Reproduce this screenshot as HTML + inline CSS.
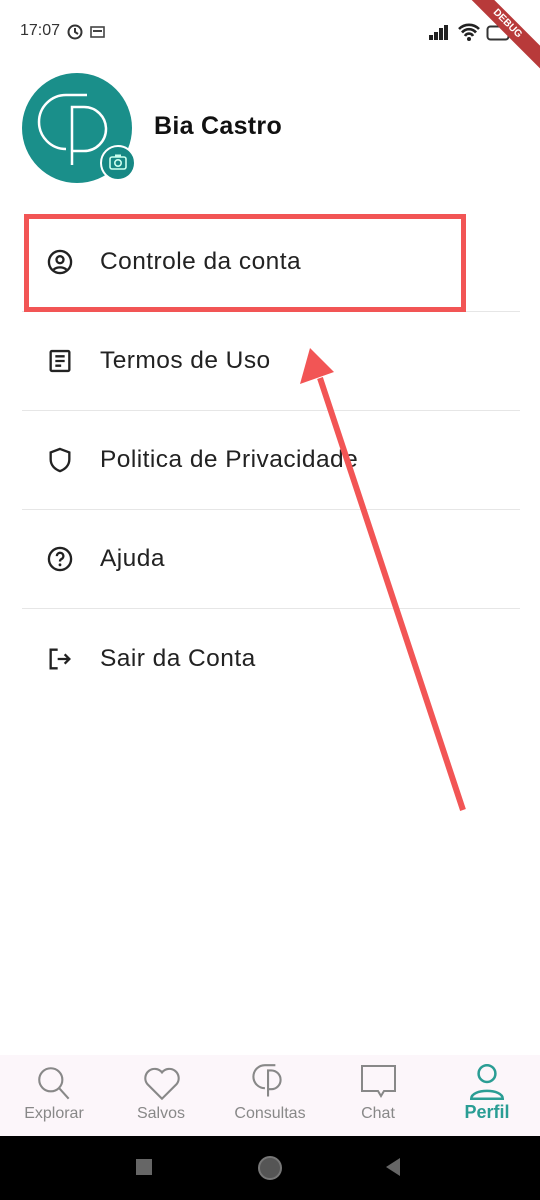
<!DOCTYPE html>
<html><head><meta charset="utf-8"><style>
*{margin:0;padding:0;box-sizing:border-box}
body{width:540px;height:1200px;background:#fff;font-family:"Liberation Sans",sans-serif;position:relative;overflow:hidden;color:#1c1b1f}
.item{position:absolute;left:22px;width:498px;height:99px;border-bottom:1px solid #e6e6e6}
.item span{position:absolute;left:78px;top:50%;transform:translateY(-50%);font-size:24.5px;letter-spacing:0.45px;color:#222}
.item svg{position:absolute;left:24px;top:50%;transform:translateY(-50%)}
.nav{position:absolute;left:0;top:1055px;width:540px;height:81px;background:#fcf6fa}
.nl{position:absolute;top:50px;font-size:16px;color:#888;text-align:center;width:100px}
</style></head><body>
<div style="position:absolute;left:20px;top:22px;font-size:16px;color:#333">17:07</div>
<svg style="position:absolute;left:67px;top:24px" width="16" height="16" viewBox="0 0 16 16"><circle cx="8" cy="8" r="6.5" fill="none" stroke="#333" stroke-width="2"/><path d="M8 4v4l3 2" stroke="#333" stroke-width="2" fill="none"/></svg>
<svg style="position:absolute;left:90px;top:26px" width="15" height="12"><rect x="1" y="1" width="13" height="10" fill="none" stroke="#444" stroke-width="1.6"/><rect x="3" y="4" width="9" height="2" fill="#444"/></svg>
<svg style="position:absolute;left:428px;top:24px" width="30" height="18"><rect x="1" y="11" width="4" height="5" fill="#222"/><rect x="6" y="8" width="4" height="8" fill="#222"/><rect x="11" y="4" width="4" height="12" fill="#222"/><rect x="16" y="1" width="4" height="15" fill="#222"/></svg>
<svg style="position:absolute;left:457px;top:22px" width="24" height="20" viewBox="0 0 24 20"><path d="M2 7a14 14 0 0 1 20 0M5 10.5a9 9 0 0 1 14 0M8 14a4.5 4.5 0 0 1 8 0" stroke="#222" stroke-width="2.6" fill="none"/><circle cx="12" cy="17" r="2" fill="#222"/></svg>
<svg style="position:absolute;left:486px;top:25px" width="26" height="16"><rect x="1.5" y="1.5" width="21" height="13" rx="3" fill="none" stroke="#333" stroke-width="2"/></svg>
<div style="position:absolute;right:-42px;top:16px;width:150px;height:16px;background:#b83a3a;transform:rotate(45deg);color:#fff;font-size:10px;font-weight:bold;text-align:center;line-height:16px">DEBUG</div>

<div style="position:absolute;left:22px;top:73px;width:110px;height:110px;border-radius:50%;background:#1a8f8a"></div>
<svg style="position:absolute;left:22px;top:73px" width="110" height="110" viewBox="0 0 110 110"><path d="M65 22H44a27 27 0 0 0 0 54" stroke="#fff" stroke-width="2.5" fill="none"/><path d="M50 92V34h12a22 22 0 0 1 0 44H50" stroke="#fff" stroke-width="2.5" fill="none"/></svg>
<div style="position:absolute;left:100px;top:145px;width:36px;height:36px;border-radius:50%;background:#168884;border:2px solid #fff"></div>
<svg style="position:absolute;left:108px;top:153px" width="20" height="18"><rect x="2" y="4" width="16" height="12" rx="2" fill="none" stroke="#cfe" stroke-width="1.6"/><circle cx="10" cy="10" r="3.2" fill="none" stroke="#cfe" stroke-width="1.6"/><rect x="7" y="1.5" width="6" height="3" fill="#cfe"/></svg>
<div style="position:absolute;left:154px;top:112px;font-size:25px;letter-spacing:0.3px;font-weight:bold;color:#111">Bia Castro</div>

<div class="item" style="top:213px"><svg width="28" height="28" viewBox="0 0 24 24"><circle cx="12" cy="12" r="9.5" fill="none" stroke="#222" stroke-width="2"/><circle cx="12" cy="10" r="3" fill="none" stroke="#222" stroke-width="2"/><path d="M6.5 18.5a7 5 0 0 1 11 0" stroke="#222" stroke-width="2" fill="none"/></svg><span>Controle da conta</span></div>
<div class="item" style="top:312px"><svg width="28" height="28" viewBox="0 0 24 24"><rect x="4" y="3.5" width="16" height="17" rx="1" fill="none" stroke="#222" stroke-width="2"/><path d="M8 8h8M8 12h8M8 16h5" stroke="#222" stroke-width="2"/></svg><span>Termos de Uso</span></div>
<div class="item" style="top:411px"><svg width="28" height="28" viewBox="0 0 24 24"><path d="M12 2.5l8 3v6c0 5-3.5 8.5-8 10-4.5-1.5-8-5-8-10v-6z" fill="none" stroke="#222" stroke-width="2"/></svg><span>Politica de Privacidade</span></div>
<div class="item" style="top:510px"><svg width="28" height="28" viewBox="0 0 24 24"><circle cx="12" cy="12" r="9.5" fill="none" stroke="#222" stroke-width="2"/><path d="M9.3 9.5a2.8 2.8 0 1 1 3.8 2.6c-.8.4-1.1 1-1.1 2" stroke="#222" stroke-width="2" fill="none"/><circle cx="12" cy="17" r="1.2" fill="#222"/></svg><span>Ajuda</span></div>
<div class="item" style="top:609px;border:none"><svg width="28" height="28" viewBox="0 0 24 24"><path d="M10 4H4v16h6" stroke="#222" stroke-width="2" fill="none"/><path d="M10 12h10M16 8l4 4-4 4" stroke="#222" stroke-width="2" fill="none"/></svg><span>Sair da Conta</span></div>

<svg style="position:absolute;left:0;top:0" width="540" height="1000"><rect x="26.5" y="216.5" width="437" height="93" fill="none" stroke="#f25555" stroke-width="5"/><path d="M463 810L320 378" stroke="#f25555" stroke-width="6"/><path d="M310 348L300 384L334 372z" fill="#f25555"/></svg>

<div class="nav">
<svg style="position:absolute;left:34px;top:8px" width="42" height="42" viewBox="0 0 40 40"><circle cx="16" cy="16" r="11" fill="none" stroke="#888" stroke-width="2"/><path d="M24 24l9 10" stroke="#888" stroke-width="2"/></svg>
<div class="nl" style="left:4px">Explorar</div>
<svg style="position:absolute;left:141px;top:10px" width="42" height="38" viewBox="0 0 40 36"><path d="M20 32L6 18a8 8 0 0 1 14-11 8 8 0 0 1 14 11z" fill="none" stroke="#888" stroke-width="2"/></svg>
<div class="nl" style="left:111px">Salvos</div>
<svg style="position:absolute;left:244px;top:7px" width="46" height="44" viewBox="0 0 44 42"><path d="M30 3H20a11 11 0 0 0 0 22" stroke="#888" stroke-width="2" fill="none"/><path d="M23 33V8h3a9 9 0 0 1 0 18h-3" stroke="#888" stroke-width="2" fill="none"/></svg>
<div class="nl" style="left:220px">Consultas</div>
<svg style="position:absolute;left:358px;top:9px" width="42" height="40" viewBox="0 0 42 40"><path d="M4 2h33v25H26l-3 5-3-5H4z" fill="none" stroke="#888" stroke-width="2"/></svg>
<div class="nl" style="left:328px">Chat</div>
<svg style="position:absolute;left:466px;top:6px" width="42" height="42" viewBox="0 0 40 40"><circle cx="20" cy="12" r="8" fill="none" stroke="#2a9d94" stroke-width="2.4"/><path d="M5 36c0-10 30-10 30 0z" fill="none" stroke="#2a9d94" stroke-width="2.4"/></svg>
<div class="nl" style="left:437px;color:#2a9d94;font-size:18px;font-weight:bold;top:47px">Perfil</div>
</div>
<div style="position:absolute;left:0;top:1136px;width:540px;height:64px;background:#000"></div>
<div style="position:absolute;left:136px;top:1159px;width:16px;height:16px;background:#666"></div>
<div style="position:absolute;left:258px;top:1156px;width:24px;height:24px;border-radius:50%;border:2px solid #777;background:#555"></div>
<svg style="position:absolute;left:384px;top:1157px" width="18" height="20"><path d="M16 1L2 10l14 9z" fill="#666"/></svg>
</body></html>
